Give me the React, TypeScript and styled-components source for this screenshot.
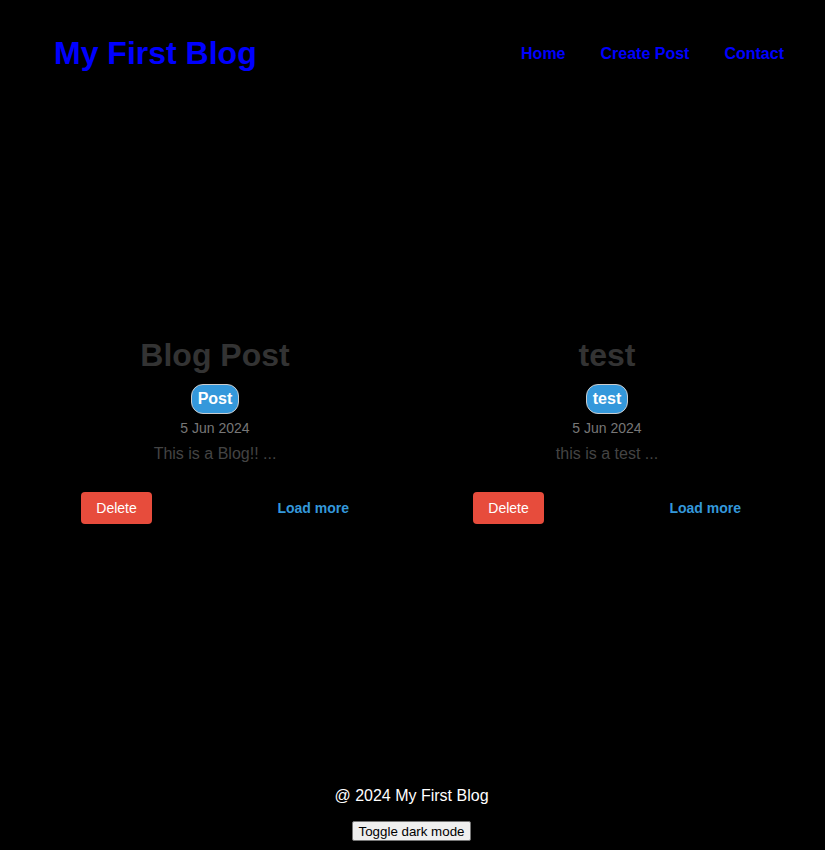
import React from "react";
import styled, { createGlobalStyle } from "styled-components";

const Global = createGlobalStyle`
  html, body { margin: 0; padding: 0; background: #000; }
  body { font-family: "Liberation Sans", Arial, sans-serif; }
`;

const Page = styled.div`
  min-height: 850px;
  display: flex;
  flex-direction: column;
  background: #000;
`;

const Header = styled.header`
  display: flex;
  align-items: center;
  justify-content: space-between;
  padding: 33px 41px 0 54px;
  height: 40px;
`;

const Logo = styled.h1`
  margin: 0;
  font-size: 32px;
  font-weight: bold;
  color: #0000ff;
  line-height: 40px;
`;

const Nav = styled.nav`
  display: flex;
  gap: 35px;
  padding-top: 2px;
`;

const NavLink = styled.a`
  color: #0000ff;
  font-weight: bold;
  font-size: 16px;
  text-decoration: none;
  line-height: 40px;
`;

const Main = styled.main`
  display: grid;
  grid-template-columns: 1fr 1fr;
  padding: 264px 22px 0 19px;
  flex: 1;
  align-items: start;
`;

const Card = styled.article`
  display: flex;
  flex-direction: column;
  align-items: center;
  text-align: center;
`;

const Title = styled.h2`
  margin: 0;
  font-size: 32px;
  font-weight: bold;
  color: #333;
  line-height: 37px;
`;

const Badge = styled.span`
  margin-top: 10px;
  display: inline-block;
  background: #3498db;
  color: #fff;
  font-weight: bold;
  font-size: 16px;
  line-height: 28px;
  padding: 0 6px;
  border: 1px solid #ccc;
  border-radius: 12px;
`;

const DateText = styled.p`
  margin: 6px 0 0;
  font-size: 14px;
  color: #777;
  line-height: 16px;
`;

const Excerpt = styled.p`
  margin: 9px 0 0;
  font-size: 16px;
  color: #444;
  line-height: 18px;
`;

const Actions = styled.div`
  margin-top: 29px;
  align-self: stretch;
  display: flex;
  justify-content: space-between;
  align-items: center;
  padding: 0 62px 0 62px;
`;

const DeleteBtn = styled.button`
  background: #e74c3c;
  color: #fff;
  border: none;
  border-radius: 4px;
  font-family: "Liberation Sans", Arial, sans-serif;
  font-size: 14px;
  height: 32px;
  width: 71px;
  padding: 0;
`;

const LoadMore = styled.a`
  color: #3498db;
  font-weight: bold;
  font-size: 14px;
  text-decoration: none;
`;

const Footer = styled.footer`
  display: flex;
  flex-direction: column;
  align-items: center;
  padding-bottom: 9px;
`;

const FooterText = styled.p`
  margin: 0;
  color: #fff;
  font-size: 16px;
  line-height: 18px;
  transform: translateX(-1px);
`;

const Toggle = styled.button`
  margin-top: 16px;
  font-family: "Liberation Sans", Arial, sans-serif;
  font-size: 13.33px;
  background: #efefef;
  color: #000;
  border: 1px solid #767676;
  border-radius: 2px;
  padding: 1px 6px;
  height: 20px;
  transform: translateX(-1px);
`;

const posts = [
  { title: "Blog Post", tag: "Post", date: "5 Jun 2024", excerpt: "This is a Blog!! ..." },
  { title: "test", tag: "test", date: "5 Jun 2024", excerpt: "this is a test ..." },
];

export default function App() {
  return (
    <Page>
      <Global />
      <Header>
        <Logo>My First Blog</Logo>
        <Nav>
          <NavLink href="#">Home</NavLink>
          <NavLink href="#">Create Post</NavLink>
          <NavLink href="#">Contact</NavLink>
        </Nav>
      </Header>
      <Main>
        {posts.map((p) => (
          <Card key={p.title}>
            <Title>{p.title}</Title>
            <Badge>{p.tag}</Badge>
            <DateText>{p.date}</DateText>
            <Excerpt>{p.excerpt}</Excerpt>
            <Actions>
              <DeleteBtn>Delete</DeleteBtn>
              <LoadMore href="#">Load more</LoadMore>
            </Actions>
          </Card>
        ))}
      </Main>
      <Footer>
        <FooterText>@ 2024 My First Blog</FooterText>
        <Toggle>Toggle dark mode</Toggle>
      </Footer>
    </Page>
  );
}
